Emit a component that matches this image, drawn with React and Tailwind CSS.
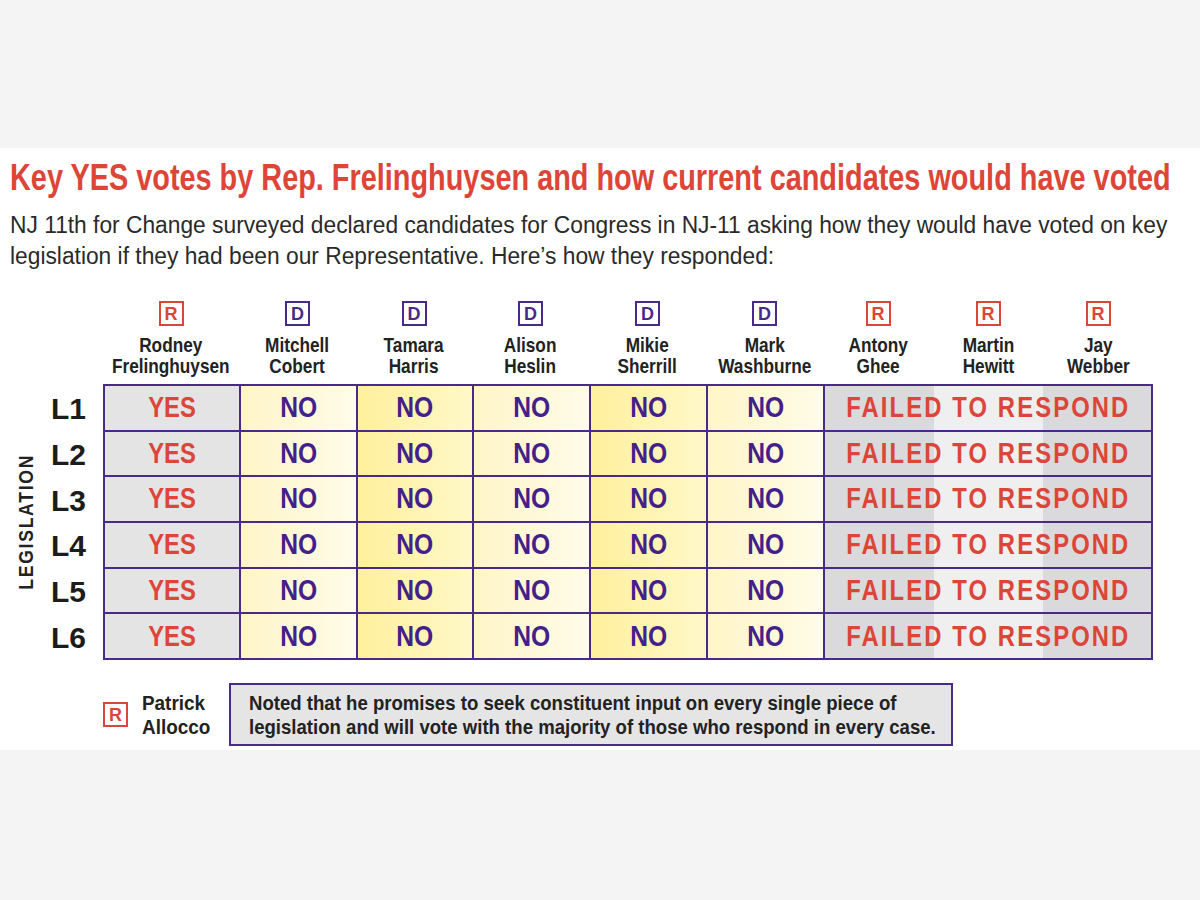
const FONT = "font-['Liberation_Sans',Arial,sans-serif]";

const candidates = [
  { party: 'R', first: 'Rodney', last: 'Frelinghuysen' },
  { party: 'D', first: 'Mitchell', last: 'Cobert' },
  { party: 'D', first: 'Tamara', last: 'Harris' },
  { party: 'D', first: 'Alison', last: 'Heslin' },
  { party: 'D', first: 'Mikie', last: 'Sherrill' },
  { party: 'D', first: 'Mark', last: 'Washburne' },
  { party: 'R', first: 'Antony', last: 'Ghee' },
  { party: 'R', first: 'Martin', last: 'Hewitt' },
  { party: 'R', first: 'Jay', last: 'Webber' },
];

const rows = ['L1', 'L2', 'L3', 'L4', 'L5', 'L6'];

// alternating light / deeper yellow for the five D columns
const noCells = [
  'bg-[linear-gradient(to_right,#fff5c8,#fffce8)]',
  'bg-[linear-gradient(to_right,#fff09c,#fff8c8)]',
  'bg-[linear-gradient(to_right,#fff5c8,#fffce8)]',
  'bg-[linear-gradient(to_right,#fff09c,#fff8c8)]',
  'bg-[linear-gradient(to_right,#fff5c8,#fffce8)]',
];

function Badge({ party }) {
  const color =
    party === 'R'
      ? 'border-[#dc4537] text-[#dc4537]'
      : 'border-[#4a2a88] text-[#4a2a88]';
  return (
    <div
      className={`w-[25px] h-[25px] border-2 bg-white flex items-center justify-center text-[18px] font-bold leading-none ${color}`}
    >
      {party}
    </div>
  );
}

export default function App() {
  return (
    <div className={`w-[1200px] min-h-[900px] bg-[#f4f4f4] overflow-hidden ${FONT}`}>
      <div className="h-[148px]" />
      <div className="bg-white h-[602px] pt-[9px]">
        <div className="pl-[10px]">
          <h1 className="text-[37px] leading-[42px] font-bold text-[#dc4537] whitespace-nowrap origin-left scale-x-[0.78]">
            Key YES votes by Rep. Frelinghuysen and how current candidates would have voted
          </h1>
        </div>
        <div className="pl-[10px] mt-[11px] text-[23px] leading-[31px] text-[#2a2a2a] whitespace-nowrap">
          <p className="origin-left scale-x-[0.99]">
            NJ 11th for Change surveyed declared candidates for Congress in NJ-11 asking how they would have voted on key
          </p>
          <p className="origin-left scale-x-[0.99]">
            legislation if they had been our Representative. Here’s how they responded:
          </p>
        </div>

        {/* column headers */}
        <div className="mt-[29px] grid grid-cols-[103px_136px_117px_116px_117px_117px_117px_110px_110px_110px]">
          <div />
          {candidates.map((c) => (
            <div key={c.last} className="flex flex-col items-center">
              <Badge party={c.party} />
              <div className="mt-[8px] text-[21px] leading-[21px] font-bold text-[#222] text-center whitespace-nowrap scale-x-[0.82]">
                {c.first}
                <br />
                {c.last}
              </div>
            </div>
          ))}
        </div>

        {/* table */}
        <div className="mt-[8px] flex">
          <div className="w-[103px] flex">
            <div className="w-[50px] flex items-center justify-center">
              <div className="[writing-mode:vertical-rl] rotate-180 scale-y-[0.84] text-[21px] font-bold tracking-[2px] text-[#222] leading-none">
                LEGISLATION
              </div>
            </div>
            <div className="flex-1 flex flex-col pt-[2px] pr-[17px]">
              {rows.map((r) => (
                <div
                  key={r}
                  className="h-[45.7px] flex items-center justify-end font-bold text-[30px] text-[#1c1c1c]"
                >
                  {r}
                </div>
              ))}
            </div>
          </div>
          <div className="w-[1050px] bg-[#4a2a88] p-[2px] grid grid-cols-[134px_115px_114px_115px_115px_115px_326px] gap-[2px]">
            {rows.map((r) => (
              <div key={r} className="contents">
                <div className="h-[43.7px] bg-[#e4e4e5] flex items-center justify-center text-[29px] font-bold text-[#dc4537]">
                  <span className="scale-x-[0.82]">YES</span>
                </div>
                {noCells.map((bg, i) => (
                  <div
                    key={i}
                    className={`h-[43.7px] flex items-center justify-center text-[29px] font-bold text-[#43208a] ${bg}`}
                  >
                    <span className="scale-x-[0.85]">NO</span>
                  </div>
                ))}
                <div className="h-[43.7px] bg-[linear-gradient(to_right,#dadadc_33.5%,#efeff0_33.5%,#efeff0_67%,#dadadc_67%)] flex items-center justify-center text-[29px] font-bold text-[#dc4537]">
                  <span className="whitespace-nowrap tracking-[2.6px] scale-x-[0.82]">FAILED TO RESPOND</span>
                </div>
              </div>
            ))}
          </div>
        </div>

        {/* footnote */}
        <div className="mt-[23px] flex items-center">
          <div className="w-[128px] flex justify-end">
            <Badge party="R" />
          </div>
          <div className="w-[101px] pl-[14px] text-[21px] leading-[24px] font-bold text-[#222] whitespace-nowrap">
            <div className="origin-left scale-x-[0.9]">Patrick</div>
            <div className="origin-left scale-x-[0.9]">Allocco</div>
          </div>
          <div className="w-[724px] h-[63px] bg-[#e5e5e6] border-2 border-[#4a2a88] pl-[18px] flex flex-col justify-center text-[21px] leading-[24px] font-bold text-[#222] whitespace-nowrap">
            <div className="origin-left scale-x-[0.885]">
              Noted that he promises to seek constituent input on every single piece of
            </div>
            <div className="origin-left scale-x-[0.885]">
              legislation and will vote with the majority of those who respond in every case.
            </div>
          </div>
        </div>
      </div>
    </div>
  );
}
